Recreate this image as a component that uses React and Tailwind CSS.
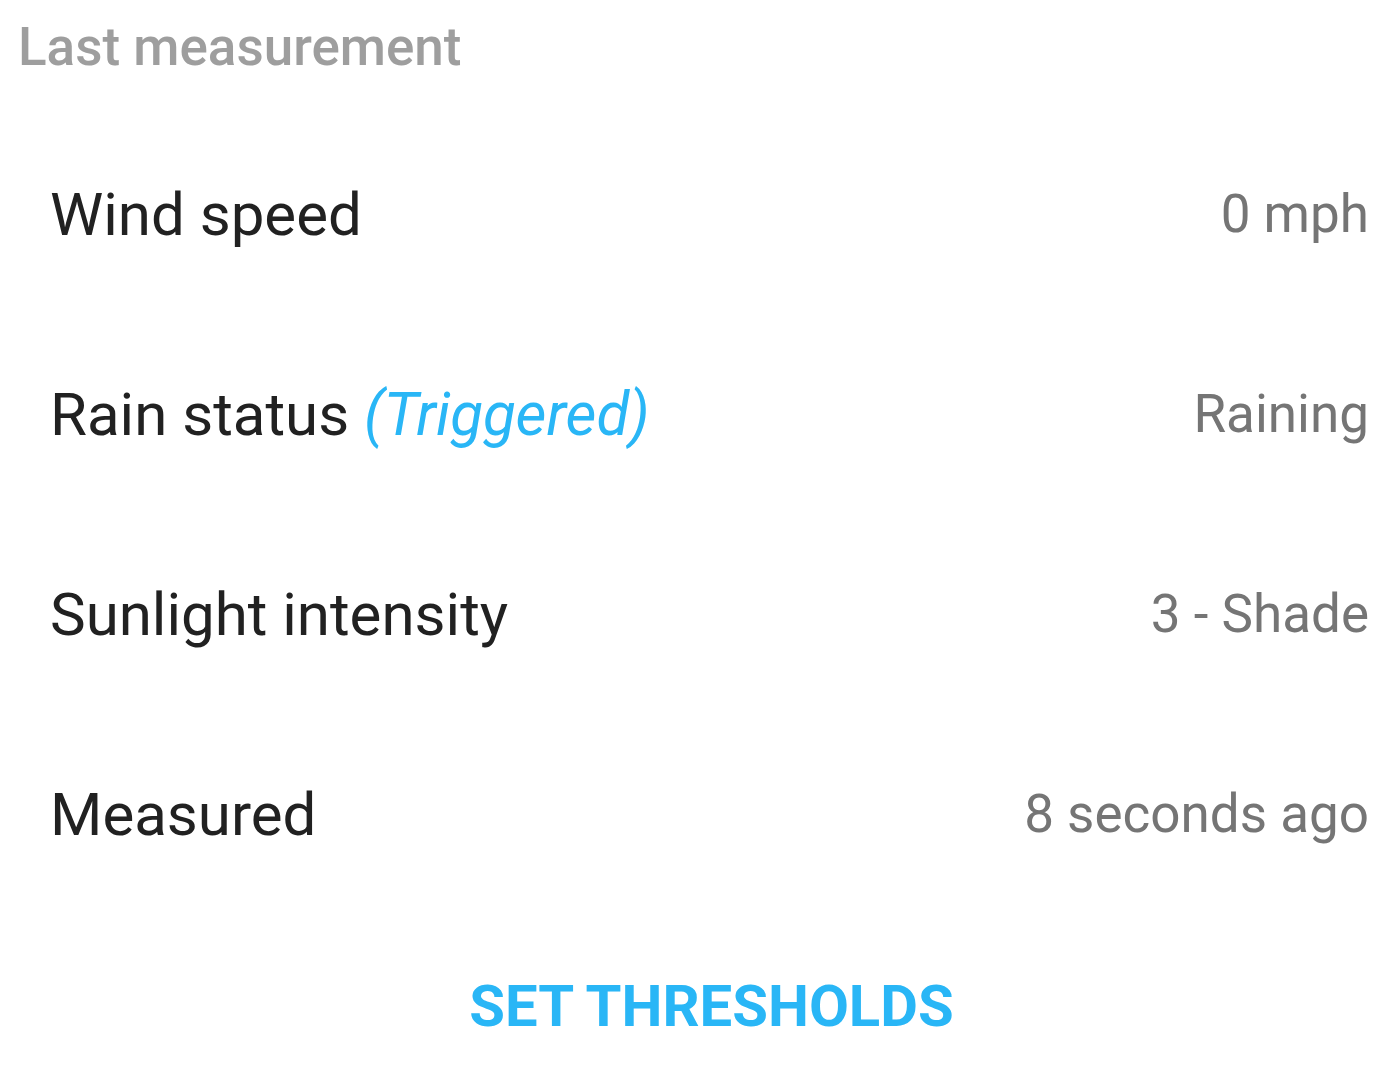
import React from 'react';

const rows = [
  { label: 'Wind speed', value: '0 mph' },
  { label: 'Rain status', note: '(Triggered)', value: 'Raining' },
  { label: 'Sunlight intensity', value: '3 - Shade' },
  { label: 'Measured', value: '8 seconds ago' },
];

export default function App() {
  return (
    <div className="min-h-screen bg-white font-['Roboto',sans-serif]">
      {/* SECTION HEADER */}
      <div className="pt-4 pl-[18px] text-[53px] leading-[62px] font-medium text-[#9e9e9e]">
        Last measurement
      </div>

      {/* MEASUREMENT ROWS */}
      <div className="mt-[37px]">
        {rows.map(row => (
          <div key={row.label} className="h-[200px] flex items-center justify-between pl-[50px] pr-[26px]">
            <span className="text-[60px] text-[#212121]">
              {row.label}
              {row.note && <span className="italic text-[#29b6f6]"> {row.note}</span>}
            </span>
            <span className="text-[53px] text-[#757575]">{row.value}</span>
          </div>
        ))}
      </div>

      {/* ACTION */}
      <div className="mt-[43px] h-24 flex items-center justify-center pl-7">
        <button className="text-[58px] font-bold uppercase text-[#29b6f6]">
          Set thresholds
        </button>
      </div>
    </div>
  );
}
